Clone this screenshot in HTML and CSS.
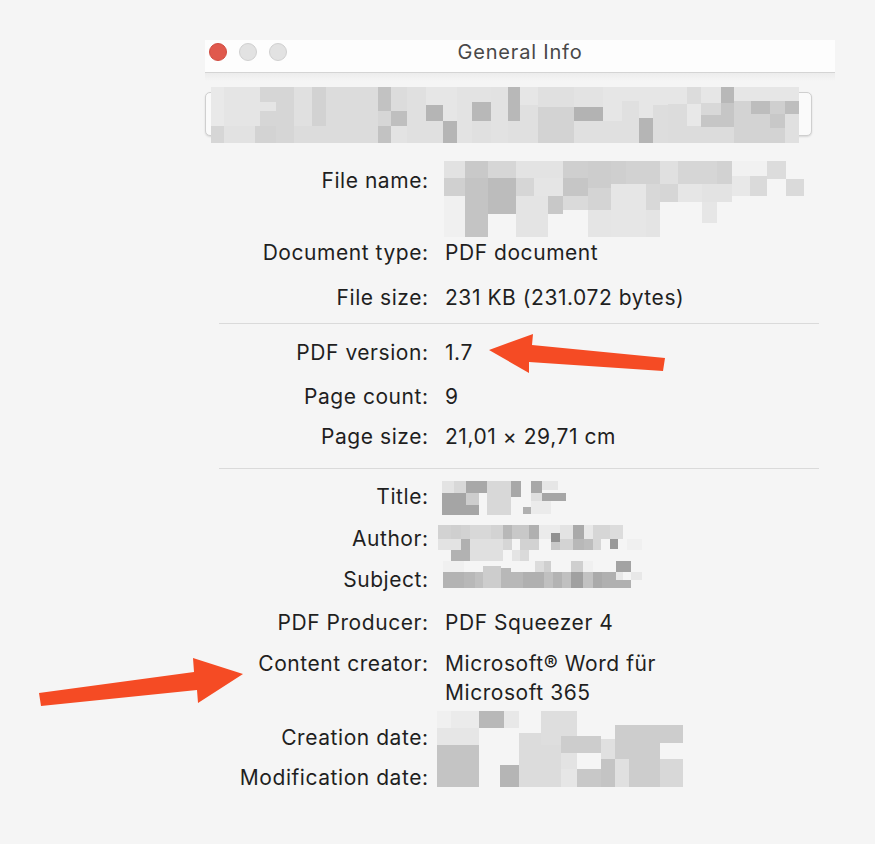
FILE: index.html
```html
<!DOCTYPE html>
<html lang="en">
<head>
<meta charset="utf-8">
<title>General Info</title>
<link rel="stylesheet" href="styles.css">
</head>
<body>
<div class="stage">
  <div class="window">
    <div class="titlebar">
      <div class="lights">
        <span class="light red"></span>
        <span class="light"></span>
        <span class="light"></span>
      </div>
      <div class="title">General Info</div>
      <div></div>
    </div>
    <div class="header">
      <div class="field">
        <svg class="pix pix-field" width="588" height="56" viewBox="211 87 588 56" shape-rendering="crispEdges">
          <rect x="211" y="87" width="14" height="39" fill="#e9e9e9"/><rect x="211" y="126" width="14" height="17" fill="#d6d6d6"/>
          <rect x="224" y="87" width="36" height="39" fill="#e5e5e5"/><rect x="224" y="126" width="31" height="17" fill="#e2e2e2"/><rect x="255" y="126" width="21" height="17" fill="#d3d3d3"/>
          <rect x="260" y="87" width="16" height="15" fill="#d6d6d6"/><rect x="260" y="102" width="16" height="9" fill="#e5e5e5"/><rect x="260" y="111" width="16" height="15" fill="#d6d6d6"/>
          <rect x="276" y="87" width="18" height="56" fill="#d6d6d6"/>
          <rect x="294" y="87" width="18" height="39" fill="#e0e0e0"/><rect x="294" y="126" width="18" height="17" fill="#dcdcdc"/>
          <rect x="312" y="87" width="14" height="39" fill="#d2d2d2"/><rect x="312" y="126" width="14" height="17" fill="#dcdcdc"/>
          <rect x="326" y="87" width="52" height="56" fill="#dcdcdc"/>
          <rect x="378" y="87" width="13" height="24" fill="#c2c2c2"/><rect x="378" y="111" width="13" height="15" fill="#d6d6d6"/><rect x="378" y="126" width="13" height="17" fill="#c2c2c2"/>
          <rect x="391" y="87" width="16" height="24" fill="#dcdcdc"/><rect x="391" y="111" width="16" height="15" fill="#bfbfbf"/><rect x="391" y="126" width="16" height="17" fill="#e3e3e3"/>
          <rect x="407" y="87" width="19" height="56" fill="#e0e0e0"/>
          <rect x="426" y="87" width="17" height="18" fill="#e6e6e6"/><rect x="426" y="105" width="17" height="16" fill="#b5b5b5"/><rect x="426" y="121" width="17" height="22" fill="#e0e0e0"/>
          <rect x="443" y="87" width="14" height="34" fill="#e6e6e6"/><rect x="443" y="121" width="14" height="22" fill="#b5b5b5"/>
          <rect x="457" y="87" width="15" height="56" fill="#e3e3e3"/>
          <rect x="472" y="87" width="19" height="15" fill="#e3e3e3"/><rect x="472" y="102" width="19" height="19" fill="#b8b8b8"/><rect x="472" y="121" width="19" height="22" fill="#e0e0e0"/>
          <rect x="491" y="87" width="17" height="56" fill="#e2e2e2"/>
          <rect x="508" y="87" width="12" height="34" fill="#b8b8b8"/><rect x="508" y="121" width="12" height="22" fill="#e0e0e0"/>
          <rect x="520" y="87" width="18" height="18" fill="#e6e6e6"/><rect x="520" y="105" width="18" height="38" fill="#e0e0e0"/>
          <rect x="538" y="87" width="36" height="20" fill="#e0e0e0"/><rect x="538" y="107" width="36" height="36" fill="#d3d3d3"/>
          <rect x="574" y="87" width="29" height="20" fill="#e3e3e3"/><rect x="574" y="107" width="29" height="14" fill="#b3b3b3"/><rect x="574" y="121" width="29" height="22" fill="#e0e0e0"/>
          <rect x="603" y="87" width="19" height="34" fill="#e6e6e6"/><rect x="603" y="121" width="19" height="22" fill="#e0e0e0"/>
          <rect x="622" y="87" width="17" height="14" fill="#e6e6e6"/><rect x="622" y="101" width="17" height="42" fill="#e0e0e0"/>
          <rect x="639" y="87" width="14" height="31" fill="#e6e6e6"/><rect x="639" y="118" width="14" height="25" fill="#b5b5b5"/>
          <rect x="653" y="87" width="15" height="18" fill="#e6e6e6"/><rect x="653" y="105" width="15" height="38" fill="#dddddd"/>
          <rect x="668" y="87" width="19" height="17" fill="#e6e6e6"/><rect x="668" y="104" width="19" height="39" fill="#dcdcdc"/>
          <rect x="687" y="87" width="14" height="17" fill="#dcdcdc"/><rect x="687" y="104" width="14" height="22" fill="#e8e8e8"/><rect x="687" y="126" width="14" height="17" fill="#dcdcdc"/>
          <rect x="701" y="87" width="20" height="16" fill="#e6e6e6"/><rect x="701" y="103" width="20" height="12" fill="#d8d8d8"/><rect x="701" y="115" width="20" height="12" fill="#c6c6c6"/><rect x="701" y="127" width="20" height="16" fill="#dcdcdc"/>
          <rect x="721" y="87" width="13" height="16" fill="#b8b8b8"/><rect x="721" y="103" width="13" height="24" fill="#c6c6c6"/><rect x="721" y="127" width="13" height="16" fill="#dcdcdc"/>
          <rect x="734" y="87" width="17" height="14" fill="#e6e6e6"/><rect x="734" y="101" width="17" height="42" fill="#d3d3d3"/>
          <rect x="751" y="87" width="19" height="14" fill="#e6e6e6"/><rect x="751" y="101" width="19" height="13" fill="#bdbdbd"/><rect x="751" y="114" width="19" height="29" fill="#d3d3d3"/>
          <rect x="770" y="87" width="15" height="14" fill="#e6e6e6"/><rect x="770" y="101" width="15" height="13" fill="#cfcfcf"/><rect x="770" y="114" width="15" height="14" fill="#c8c8c8"/><rect x="770" y="128" width="15" height="15" fill="#d3d3d3"/>
          <rect x="785" y="87" width="14" height="14" fill="#e6e6e6"/><rect x="785" y="101" width="14" height="13" fill="#bebebe"/><rect x="785" y="114" width="14" height="29" fill="#e0e0e0"/>
        </svg>
      </div>
    </div>

    <div class="info">
      <div class="row row-file">
        <div class="label label-file">File name:</div>
        <div class="value">
          <svg class="pix" width="360" height="78" viewBox="439 161 360 78" shape-rendering="crispEdges">
            <rect x="439" y="162" width="21" height="17" fill="#e2e2e2"/><rect x="439" y="179" width="21" height="18" fill="#d0d0d0"/><rect x="439" y="197" width="21" height="41" fill="#f0f0f0"/>
            <rect x="460" y="162" width="23" height="17" fill="#c9c9c9"/><rect x="460" y="179" width="23" height="59" fill="#c4c4c4"/>
            <rect x="483" y="162" width="28" height="17" fill="#d6d6d6"/><rect x="483" y="179" width="28" height="36" fill="#bcbcbc"/>
            <rect x="511" y="162" width="18" height="17" fill="#e3e3e3"/><rect x="511" y="179" width="18" height="18" fill="#d6d6d6"/><rect x="511" y="197" width="32" height="41" fill="#e4e4e4"/>
            <rect x="529" y="162" width="14" height="17" fill="#e3e3e3"/><rect x="529" y="179" width="14" height="18" fill="#e5e5e5"/>
            <rect x="543" y="162" width="15" height="17" fill="#e3e3e3"/><rect x="543" y="179" width="15" height="18" fill="#e5e5e5"/><rect x="543" y="197" width="15" height="18" fill="#c8c8c8"/>
            <rect x="558" y="162" width="25" height="17" fill="#cfcfcf"/><rect x="558" y="179" width="25" height="18" fill="#c6c6c6"/><rect x="558" y="197" width="25" height="14" fill="#dadada"/>
            <rect x="583" y="162" width="23" height="27" fill="#cdcdcd"/><rect x="583" y="189" width="23" height="22" fill="#d4d4d4"/><rect x="583" y="211" width="23" height="27" fill="#e5e5e5"/>
            <rect x="606" y="162" width="15" height="23" fill="#cfcfcf"/><rect x="606" y="185" width="35" height="53" fill="#e6e6e6"/>
            <rect x="621" y="162" width="34" height="23" fill="#d2d2d2"/><rect x="641" y="185" width="14" height="26" fill="#d8d8d8"/><rect x="641" y="211" width="14" height="27" fill="#e4e4e4"/>
            <rect x="655" y="162" width="18" height="23" fill="#e0e0e0"/><rect x="655" y="185" width="18" height="18" fill="#d6d6d6"/>
            <rect x="673" y="162" width="24" height="23" fill="#d6d6d6"/><rect x="673" y="185" width="24" height="18" fill="#e6e6e6"/>
            <rect x="697" y="162" width="15" height="23" fill="#d6d6d6"/><rect x="697" y="185" width="15" height="18" fill="#e3e3e3"/><rect x="697" y="203" width="15" height="21" fill="#e6e6e6"/>
            <rect x="712" y="162" width="15" height="23" fill="#d2d2d2"/><rect x="712" y="185" width="15" height="18" fill="#e3e3e3"/>
            <rect x="727" y="162" width="35" height="15" fill="#f1f1f1"/><rect x="727" y="177" width="18" height="20" fill="#e8e8e8"/><rect x="745" y="177" width="17" height="20" fill="#dadada"/>
            <rect x="762" y="162" width="19" height="18" fill="#dcdcdc"/><rect x="781" y="180" width="18" height="17" fill="#dadada"/>
          </svg>
        </div>
      </div>
      <div class="row row-doctype">
        <div class="label">Document type:</div>
        <div class="value">PDF document</div>
      </div>
      <div class="row row-size">
        <div class="label">File size:</div>
        <div class="value">231 KB (231.072 bytes)</div>
      </div>

      <div class="sep sep-1"></div>

      <div class="row row-version">
        <div class="label">PDF version:</div>
        <div class="value">1.7</div>
      </div>
      <div class="row row-count">
        <div class="label">Page count:</div>
        <div class="value">9</div>
      </div>
      <div class="row row-pagesize">
        <div class="label">Page size:</div>
        <div class="value">21,01 × 29,71 cm</div>
      </div>

      <div class="sep sep-2"></div>

      <div class="row row-title">
        <div class="label label-title">Title:</div>
        <div class="value">
          <svg class="pix" width="125" height="34" viewBox="442 481 125 34" shape-rendering="crispEdges">
            <rect x="442" y="481" width="12" height="12" fill="#e3e3e3"/><rect x="454" y="481" width="12" height="12" fill="#d8d8d8"/><rect x="466" y="481" width="21" height="12" fill="#a8a8a8"/>
            <rect x="442" y="493" width="24" height="22" fill="#a5a5a5"/><rect x="466" y="493" width="13" height="12" fill="#cdcdcd"/><rect x="466" y="505" width="13" height="10" fill="#a5a5a5"/>
            <rect x="487" y="481" width="24" height="34" fill="#d8d8d8"/><rect x="511" y="481" width="10" height="16" fill="#a8a8a8"/>
            <rect x="531" y="481" width="11" height="12" fill="#a8a8a8"/><rect x="542" y="481" width="16" height="9" fill="#e6e6e6"/>
            <rect x="531" y="493" width="11" height="8" fill="#e0e0e0"/><rect x="542" y="493" width="24" height="8" fill="#a6a6a6"/>
            <rect x="531" y="501" width="20" height="13" fill="#ebebeb"/><rect x="523" y="507" width="8" height="7" fill="#b0b0b0"/>
          </svg>
        </div>
      </div>
      <div class="row row-author">
        <div class="label">Author:</div>
        <div class="value">
          <svg class="pix" width="205" height="36" viewBox="438 525 205 36" shape-rendering="crispEdges">
            <rect x="438" y="525" width="13" height="14" fill="#d2d2d2"/><rect x="451" y="525" width="10" height="14" fill="#cfcfcf"/><rect x="461" y="525" width="9" height="14" fill="#d2d2d2"/>
            <rect x="470" y="525" width="21" height="14" fill="#d8d8d8"/><rect x="491" y="525" width="12" height="14" fill="#d3d3d3"/><rect x="503" y="525" width="9" height="14" fill="#b8b8b8"/>
            <rect x="512" y="525" width="17" height="14" fill="#c8c8c8"/><rect x="529" y="525" width="10" height="14" fill="#b0b0b0"/><rect x="539" y="525" width="21" height="14" fill="#ebebeb"/>
            <rect x="560" y="525" width="13" height="14" fill="#e3e3e3"/><rect x="573" y="525" width="11" height="14" fill="#aaaaaa"/><rect x="584" y="525" width="9" height="14" fill="#e8e8e8"/>
            <rect x="593" y="525" width="17" height="14" fill="#d6d6d6"/><rect x="610" y="525" width="13" height="14" fill="#dcdcdc"/>
            <rect x="438" y="539" width="23" height="11" fill="#e3e3e3"/><rect x="461" y="539" width="9" height="11" fill="#b0b0b0"/><rect x="470" y="539" width="33" height="22" fill="#e0e0e0"/>
            <rect x="503" y="539" width="9" height="11" fill="#d6d6d6"/><rect x="520" y="539" width="19" height="11" fill="#d2d2d2"/><rect x="551" y="533" width="9" height="9" fill="#919191"/>
            <rect x="551" y="542" width="9" height="8" fill="#c8c8c8"/><rect x="560" y="539" width="13" height="11" fill="#d3d3d3"/><rect x="573" y="539" width="11" height="11" fill="#b8b8b8"/>
            <rect x="584" y="539" width="9" height="11" fill="#bdbdbd"/><rect x="593" y="539" width="8" height="11" fill="#d6d6d6"/><rect x="610" y="539" width="8" height="10" fill="#999999"/>
            <rect x="627" y="539" width="15" height="11" fill="#f0f0f0"/>
            <rect x="451" y="550" width="19" height="11" fill="#b2b2b2"/><rect x="512" y="550" width="8" height="11" fill="#e4e4e4"/><rect x="520" y="550" width="9" height="11" fill="#dadada"/>
          </svg>
        </div>
      </div>
      <div class="row row-subject">
        <div class="label label-subject">Subject:</div>
        <div class="value">
          <svg class="pix" width="200" height="27" viewBox="443 561 200 27" shape-rendering="crispEdges">
            <rect x="443" y="561" width="21" height="11" fill="#f0f0f0"/><rect x="535" y="561" width="9" height="11" fill="#dcdcdc"/><rect x="544" y="561" width="7" height="11" fill="#cfcfcf"/>
            <rect x="571" y="561" width="12" height="11" fill="#cfcfcf"/><rect x="583" y="561" width="10" height="11" fill="#f0f0f0"/><rect x="616" y="561" width="15" height="11" fill="#a3a3a3"/>
            <rect x="443" y="572" width="21" height="16" fill="#b3b3b3"/><rect x="464" y="572" width="11" height="16" fill="#b8b8b8"/><rect x="475" y="572" width="8" height="16" fill="#c0c0c0"/>
            <rect x="483" y="566" width="18" height="22" fill="#cdcdcd"/><rect x="501" y="568" width="10" height="20" fill="#b8b8b8"/><rect x="511" y="572" width="12" height="16" fill="#b8b8b8"/>
            <rect x="523" y="572" width="21" height="16" fill="#b0b0b0"/><rect x="544" y="572" width="9" height="16" fill="#c0c0c0"/><rect x="553" y="572" width="9" height="16" fill="#b3b3b3"/>
            <rect x="562" y="572" width="9" height="16" fill="#c0c0c0"/><rect x="571" y="572" width="12" height="16" fill="#a0a0a0"/><rect x="583" y="572" width="10" height="16" fill="#c2c2c2"/>
            <rect x="593" y="572" width="9" height="16" fill="#aaaaaa"/><rect x="602" y="572" width="14" height="16" fill="#b0b0b0"/><rect x="616" y="572" width="7" height="8" fill="#e8e8e8"/>
            <rect x="616" y="580" width="15" height="8" fill="#b0b0b0"/><rect x="631" y="572" width="11" height="8" fill="#e8e8e8"/>
          </svg>
        </div>
      </div>
      <div class="row row-producer">
        <div class="label">PDF Producer:</div>
        <div class="value">PDF Squeezer 4</div>
      </div>
      <div class="row row-creator">
        <div class="label">Content creator:</div>
        <div class="value">Microsoft® Word für<br>Microsoft 365</div>
      </div>
      <div class="dates">
        <div class="label date-label-1">Creation date:</div>
        <div class="label date-label-2">Modification date:</div>
        <div class="value date-value">
          <svg class="pix" width="246" height="76" viewBox="437 712 246 76" shape-rendering="crispEdges">
            <rect x="437" y="712" width="14" height="17" fill="#f0f0f0"/><rect x="437" y="729" width="42" height="17" fill="#e6e6e6"/><rect x="437" y="746" width="42" height="42" fill="#c4c4c4"/>
            <rect x="451" y="712" width="28" height="17" fill="#ebebeb"/><rect x="479" y="712" width="25" height="17" fill="#b8b8b8"/><rect x="504" y="712" width="15" height="17" fill="#e8e8e8"/>
            <rect x="500" y="766" width="19" height="22" fill="#b5b5b5"/>
            <rect x="519" y="734" width="22" height="54" fill="#dcdcdc"/><rect x="541" y="712" width="20" height="34" fill="#dedede"/><rect x="541" y="746" width="20" height="42" fill="#dcdcdc"/>
            <rect x="561" y="712" width="16" height="25" fill="#dedede"/><rect x="561" y="737" width="40" height="17" fill="#cdcdcd"/><rect x="561" y="754" width="16" height="16" fill="#e3e3e3"/>
            <rect x="561" y="770" width="16" height="18" fill="#e6e6e6"/><rect x="577" y="770" width="24" height="18" fill="#c8c8c8"/>
            <rect x="601" y="740" width="14" height="20" fill="#e0e0e0"/><rect x="601" y="760" width="14" height="28" fill="#c4c4c4"/>
            <rect x="615" y="726" width="14" height="34" fill="#cdcdcd"/><rect x="615" y="760" width="14" height="28" fill="#e0e0e0"/>
            <rect x="629" y="726" width="54" height="18" fill="#cdcdcd"/><rect x="629" y="744" width="31" height="44" fill="#cdcdcd"/><rect x="660" y="760" width="23" height="28" fill="#d8d8d8"/>
          </svg>
        </div>
      </div>
    </div>
  </div>

  <svg class="arrows" width="875" height="844" viewBox="0 0 875 844">
    <polygon points="489,350 533,334 532,345 665,358 663,371 529,362 529,373" fill="#f54b24"/>
    <polygon points="39,693 194,672 193,658 243,674 198,703 197,690 41,706" fill="#f54b24"/>
  </svg>
</div>
</body>
</html>
```

FILE: styles.css
```css
* { box-sizing: border-box; }

html, body {
  margin: 0;
  padding: 0;
  background: #f5f5f5;
}

body {
  font-family: Inter, "Noto Sans", "Liberation Sans", sans-serif;
  color: #1f1f1f;
}

.stage {
  position: relative;
  width: 875px;
  height: 844px;
  overflow: hidden;
}

.window {
  margin-left: 205px;
  width: 630px;
  padding-top: 40px;
}

.titlebar {
  height: 33px;
  padding-bottom: 9px;
  background: #fdfdfd;
  border-bottom: 1px solid #d4d4d4;
  display: grid;
  grid-template-columns: 1fr auto 1fr;
  align-items: center;
}

.lights {
  display: flex;
  gap: 12px;
  padding-left: 4px;
}

.light {
  width: 18px;
  height: 18px;
  border-radius: 50%;
  background: #e2e2e2;
  border: 1px solid #d0d0d0;
}

.light.red {
  background: #e0594d;
  border-color: #d04c41;
}

.title {
  font-size: 20px;
  line-height: 24px;
  color: #484848;
  letter-spacing: 0.8px;
}

.header {
  height: 87px;
  padding-top: 14px;
  background: linear-gradient(#ececec, #f5f5f5 8px);
}

.field {
  position: relative;
  width: 605px;
  height: 56px;
  display: flex;
  align-items: center;
}

.field::before {
  content: "";
  position: absolute;
  left: 0;
  top: 5px;
  width: 605px;
  height: 42px;
  border: 1px solid #cfcfcf;
  border-radius: 5px;
  background: #fafafa;
  box-shadow: 0 1px 2px rgba(0, 0, 0, 0.12);
}

.pix {
  display: block;
}

.pix-field {
  position: relative;
  margin-left: 6px;
  margin-top: 0;
}

.info {
  font-size: 21px;
  line-height: 29px;
  letter-spacing: 0.55px;
}

.row {
  display: grid;
  grid-template-columns: 223px 1fr;
  column-gap: 17px;
  align-items: start;
}

.label {
  text-align: right;
  white-space: nowrap;
  margin-right: -0.55px;
}

.value {
  white-space: nowrap;
  margin-left: -6px;
  padding-left: 6px;
}

.row-file { margin-top: 0; }
.row-file .value { margin-left: -7px; }
.label-file { padding-top: 6px; }
.row-doctype { margin-top: 0; }
.row-size { margin-top: 16px; }

.sep {
  height: 1px;
  background: #dadada;
  margin-left: 14px;
  width: 600px;
}

.sep-1 { margin-top: 11px; }
.row-version { margin-top: 14px; }
.row-count { margin-top: 15px; }
.row-pagesize { margin-top: 11px; }

.sep-2 { margin-top: 17px; }
.row-title { margin-top: 12px; }
.label-title { padding-top: 1px; }
.row-title .value { margin-left: -9px; }

.row-author { margin-top: 9px; }
.row-author .value { margin-left: -13px; padding-top: 1px; }
.row-subject { margin-top: 0; }
.label-subject { padding-top: 4px; }
.row-subject .value { margin-left: -8px; }

.row-producer { margin-top: 14px; }
.row-creator { margin-top: 12px; }

.dates {
  display: grid;
  grid-template-columns: 223px 1fr;
  grid-template-rows: auto auto;
  column-gap: 17px;
  margin-top: 5px;
}

.date-label-1 { grid-column: 1; grid-row: 1; padding-top: 11px; }
.date-label-2 { grid-column: 1; grid-row: 2; padding-top: 11px; }
.date-value { grid-column: 2; grid-row: 1 / 3; margin-left: -14px; margin-top: -1px; }

.arrows {
  position: absolute;
  left: 0;
  top: 0;
  pointer-events: none;
}
```
